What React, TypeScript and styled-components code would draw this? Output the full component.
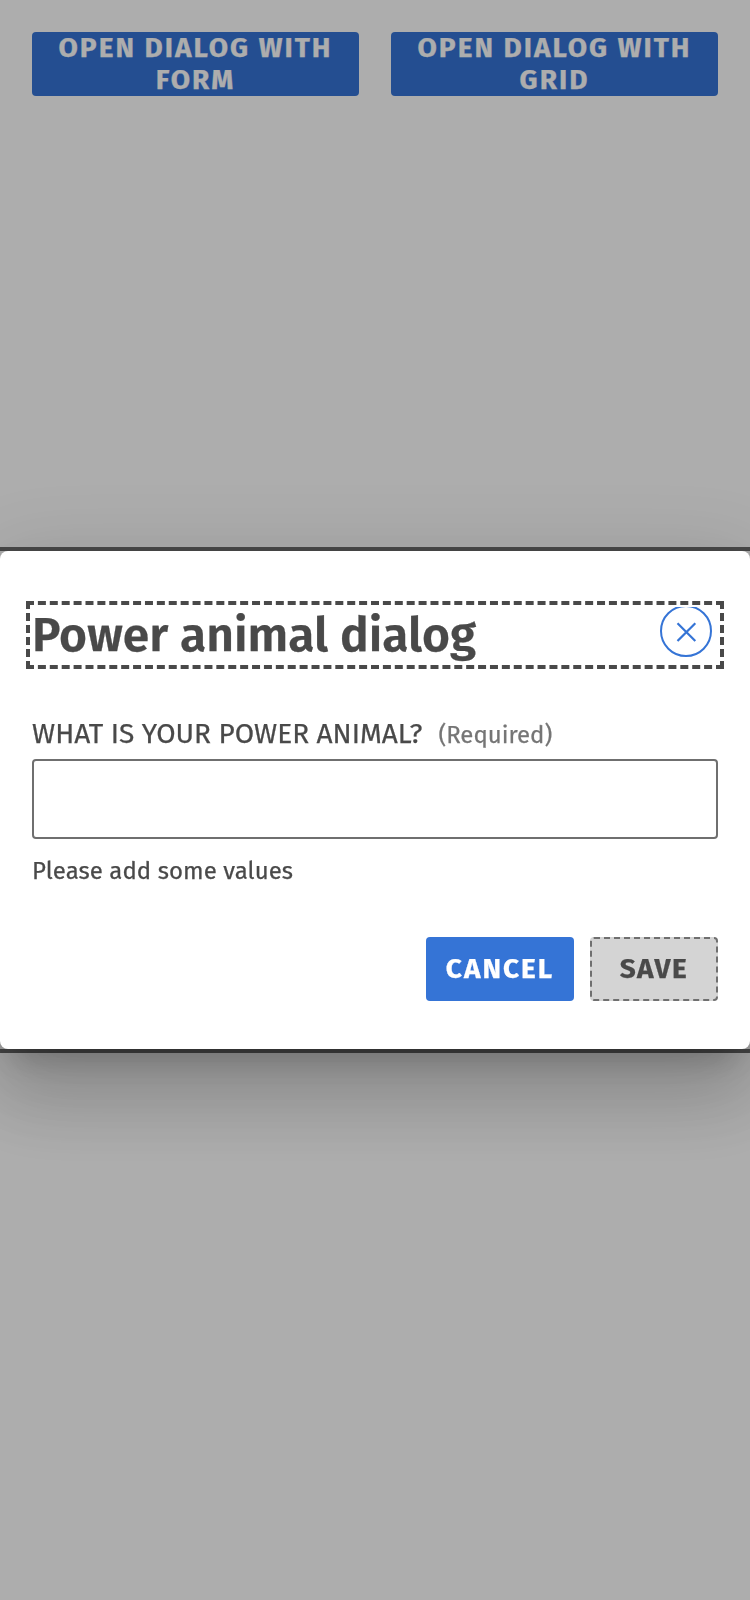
import React from "react";
import styled, { createGlobalStyle } from "styled-components";

const ink = "#494949";
const blue = "#3574d6";
const fontStack = `"Fira Sans", "Noto Sans", sans-serif`;

const GlobalStyle = createGlobalStyle`
  * { box-sizing: border-box; }
  body {
    margin: 0;
    color: ${ink};
    background: #fff;
    font-family: ${fontStack};
    -webkit-text-stroke: 0.25px currentColor;
    overflow: hidden;
  }
`;

const Page = styled.main`
  height: 1600px;
  padding: 32px;
`;

const Launchers = styled.div`
  display: grid;
  grid-template-columns: 1fr 1fr;
  gap: 32px;
`;

const Button = styled.button<{ $width?: number }>`
  width: ${(p) => (p.$width ? `${p.$width}px` : "100%")};
  height: 64px;
  padding: ${(p) => (p.$width ? "0 16px" : "0 16px 2px")};
  border: 0;
  border-radius: 4px;
  background: ${blue};
  color: #fff;
  font: 700 28px/32px ${fontStack};
  letter-spacing: 2px;
  text-transform: uppercase;

  &:disabled {
    border: 2px dashed #6f6f6f;
    background: #d4d4d4;
    color: ${ink};
    letter-spacing: 1.5px;
  }
`;

const Backdrop = styled.div`
  position: fixed;
  inset: 0;
  display: flex;
  align-items: center;
  background: rgba(0, 0, 0, 0.32);
`;

const DialogFrame = styled.div`
  width: 100%;
  outline: 4px solid ${ink};
`;

const Surface = styled.section`
  position: relative;
  height: 498px;
  padding: 56px 32px 48px;
  border-radius: 8px;
  background: #fff;
  box-shadow:
    0 22px 30px -14px rgba(0, 0, 0, 0.2),
    0 48px 76px 6px rgba(0, 0, 0, 0.14),
    0 18px 92px 16px rgba(0, 0, 0, 0.12);
`;

const TitleOutline = styled.div`
  outline: 4px dashed ${ink};
  outline-offset: 2px;
`;

const TitleBar = styled.header`
  display: flex;
  align-items: flex-start;
  justify-content: space-between;
  height: 56px;
  padding-right: 6px;
  overflow: hidden;
`;

const Title = styled.h2`
  margin: 0;
  font-size: 48px;
  font-weight: 600;
  line-height: 56px;
  white-space: nowrap;
`;

const CloseButton = styled.button`
  flex: none;
  width: 52px;
  height: 52px;
  margin-top: -2px;
  padding: 0;
  border: 2px solid ${blue};
  border-radius: 50%;
  background: none;
  color: ${blue};

  svg { display: block; }
`;

const Field = styled.div`
  display: flex;
  flex-direction: column;
  padding-top: 55px;
`;

const FieldLabel = styled.label`
  display: flex;
  align-items: baseline;
  gap: 16px;
  height: 41px;
  font-size: 28px;
  line-height: 32px;
  white-space: nowrap;
`;

const Required = styled.span`
  color: #757575;
  font-size: 24px;
`;

const Input = styled.input`
  width: 100%;
  height: 80px;
  padding: 0 16px;
  border: 2px solid #6f6f6f;
  border-radius: 4px;
  background: #fff;
  font: 28px ${fontStack};
`;

const Helper = styled.p`
  margin: 16px 0 0;
  font-size: 24px;
  line-height: 32px;
  letter-spacing: 0.06px;
`;

const Actions = styled.footer`
  display: flex;
  justify-content: flex-end;
  gap: 16px;
  margin-top: 50px;
`;

export default function App() {
  return (
    <>
      <GlobalStyle />
      <Page>
        <Launchers>
          <Button>Open dialog with form</Button>
          <Button>Open dialog with grid</Button>
        </Launchers>
      </Page>
      <Backdrop>
        <DialogFrame>
          <Surface role="dialog" aria-modal="true">
            <TitleOutline>
              <TitleBar>
                <Title>Power animal dialog</Title>
                <CloseButton aria-label="Close">
                  <svg width="48" height="48" viewBox="0 0 48 48" fill="none" stroke="currentColor" strokeWidth="2.2">
                    <path d="M15.5 16.2 33.3 34M33.3 16.2 15.5 34" />
                  </svg>
                </CloseButton>
              </TitleBar>
            </TitleOutline>
            <Field>
              <FieldLabel htmlFor="animal">
                WHAT IS YOUR POWER ANIMAL?
                <Required>(Required)</Required>
              </FieldLabel>
              <Input id="animal" />
              <Helper>Please add some values</Helper>
            </Field>
            <Actions>
              <Button $width={148}>Cancel</Button>
              <Button $width={128} disabled>Save</Button>
            </Actions>
          </Surface>
        </DialogFrame>
      </Backdrop>
    </>
  );
}
